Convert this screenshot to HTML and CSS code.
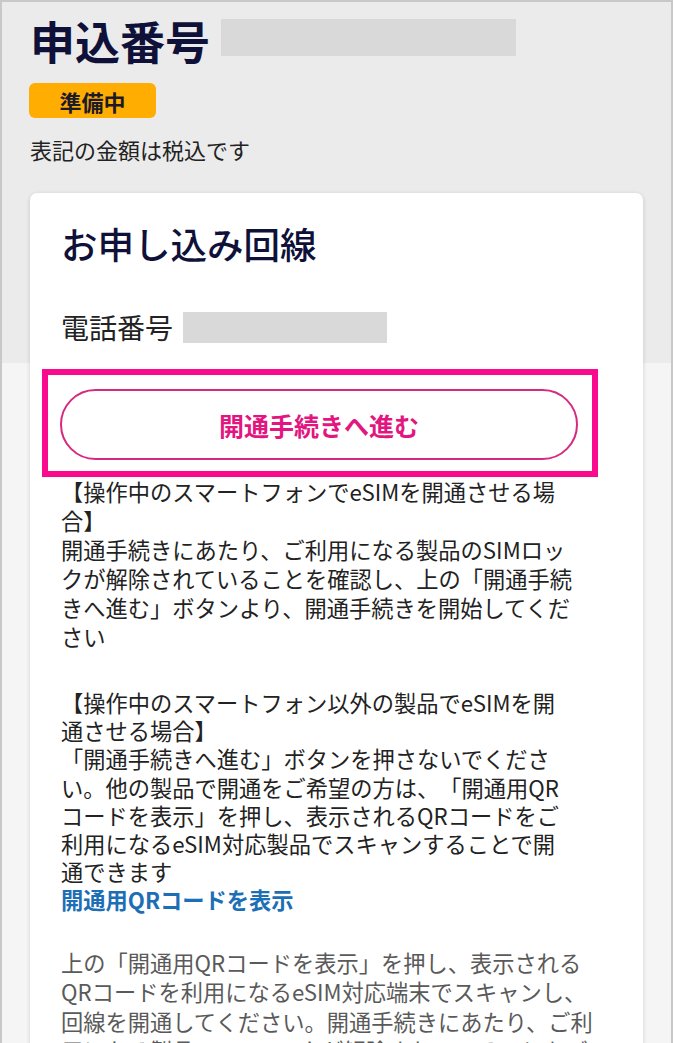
FILE: index.html
```html
<!DOCTYPE html>
<html lang="ja">
<head>
<meta charset="utf-8">
<title>申込番号</title>
<link rel="stylesheet" href="styles.css">
</head>
<body>
<div class="page">
  <header class="summary">
    <div class="app-no">
      <h1 class="app-no__label">申込番号</h1>
      <span class="mask mask--lg"></span>
    </div>
    <span class="badge">準備中</span>
    <p class="tax-note">表記の金額は税込です</p>
  </header>

  <section class="card">
    <h2 class="card__title">お申し込み回線</h2>
    <div class="phone">
      <span class="phone__label">電話番号</span>
      <span class="mask mask--md"></span>
    </div>

    <div class="highlight">
      <button class="btn-activate" type="button">開通手続きへ進む</button>
    </div>

    <div class="notes">
      <p class="notes__para">【操作中のスマートフォンでeSIMを開通させる場合】<br>開通手続きにあたり、ご利用になる製品のSIMロックが解除されていることを確認し、上の「開通手続きへ進む」ボタンより、開通手続きを開始してください</p>
      <p class="notes__para notes__para--gap">【操作中のスマートフォン以外の製品でeSIMを開通させる場合】<br>「開通手続きへ進む」ボタンを押さないでください。他の製品で開通をご希望の方は、「開通用QRコードを表示」を押し、表示されるQRコードをご利用になるeSIM対応製品でスキャンすることで開通できます<br><a class="qr-link" href="#">開通用QRコードを表示</a></p>
    </div>

    <p class="guide">上の「開通用QRコードを表示」を押し、表示されるQRコードを利用になるeSIM対応端末でスキャンし、回線を開通してください。開通手続きにあたり、ご利用になる製品のSIMロックが解除されていることをご確認ください。</p>
  </section>
</div>
</body>
</html>
```

FILE: styles.css
```css
* {
  box-sizing: border-box;
}

html, body {
  margin: 0;
  padding: 0;
}

body {
  font-family: "Noto Sans CJK JP", "Noto Sans", sans-serif;
  color: #222;
  background: #f5f5f5;
  text-spacing-trim: space-all;
}

.page {
  min-height: 1043px;
  border: 2px solid #c8c8c8;
  border-bottom: none;
  background: linear-gradient(to bottom, #ebebeb 0, #ebebeb 361px, #f5f5f5 361px, #f5f5f5 100%);
  padding: 0 28px 0 28px;
  overflow: hidden;
}

/* ---------- summary ---------- */
.summary {
  padding-top: 10px;
}

.app-no {
  display: flex;
  align-items: center;
}

.app-no__label {
  margin: 0;
  font-size: 45px;
  line-height: 58px;
  font-weight: 700;
  color: #0f1139;
  letter-spacing: 0;
}

.mask {
  display: inline-block;
  background: #d9d9d9;
}

.mask--lg {
  width: 295px;
  height: 37px;
  margin-left: 11px;
  margin-bottom: 7px;
}

.badge {
  display: inline-flex;
  align-items: center;
  justify-content: center;
  width: 127px;
  height: 35px;
  margin-top: 13px;
  margin-left: -1px;
  border-radius: 6px;
  background: #ffad00;
  color: #1c1a28;
  font-size: 22px;
  font-weight: 700;
  line-height: 1;
}

.tax-note {
  margin: 17px 0 0;
  font-size: 22px;
  line-height: 28px;
  color: #222;
}

/* ---------- card ---------- */
.card {
  margin-top: 30px;
  background: #fff;
  border-radius: 7px;
  box-shadow: 0 1px 4px rgba(0, 0, 0, 0.16);
  padding: 27px 68px 0 31px;
}

.card__title {
  margin: 0;
  font-size: 36.5px;
  line-height: 47px;
  font-weight: 500;
  color: #0f1139;
}

.phone {
  display: flex;
  align-items: center;
  height: 36px;
  margin-top: 42px;
}

.phone__label {
  font-size: 28px;
  line-height: 36px;
  color: #222;
}

.mask--md {
  width: 204px;
  height: 31px;
  margin-left: 10px;
}

.highlight {
  margin: 24px -23px 0 -19px;
  border: 6px solid #fa0a8c;
  padding: 14px 14px 11px 12px;
}

.btn-activate {
  display: block;
  width: 100%;
  height: 71px;
  border: 2px solid #d42a80;
  border-radius: 36px;
  background: #fff;
  font-family: inherit;
  font-size: 25px;
  font-weight: 700;
  color: #e3167f;
  cursor: pointer;
}

.notes__para {
  margin: 0;
  font-size: 22.25px;
  line-height: 29px;
  color: #222;
}

.notes__para--gap {
  margin-top: 37px;
  line-height: 28.2px;
}

.qr-link {
  color: #1d6fb5;
  font-weight: 700;
  text-decoration: none;
}

.guide {
  margin: 34px -28px 0 0;
  font-size: 22.25px;
  line-height: 29.5px;
  color: #5a5a5a;
}
```
